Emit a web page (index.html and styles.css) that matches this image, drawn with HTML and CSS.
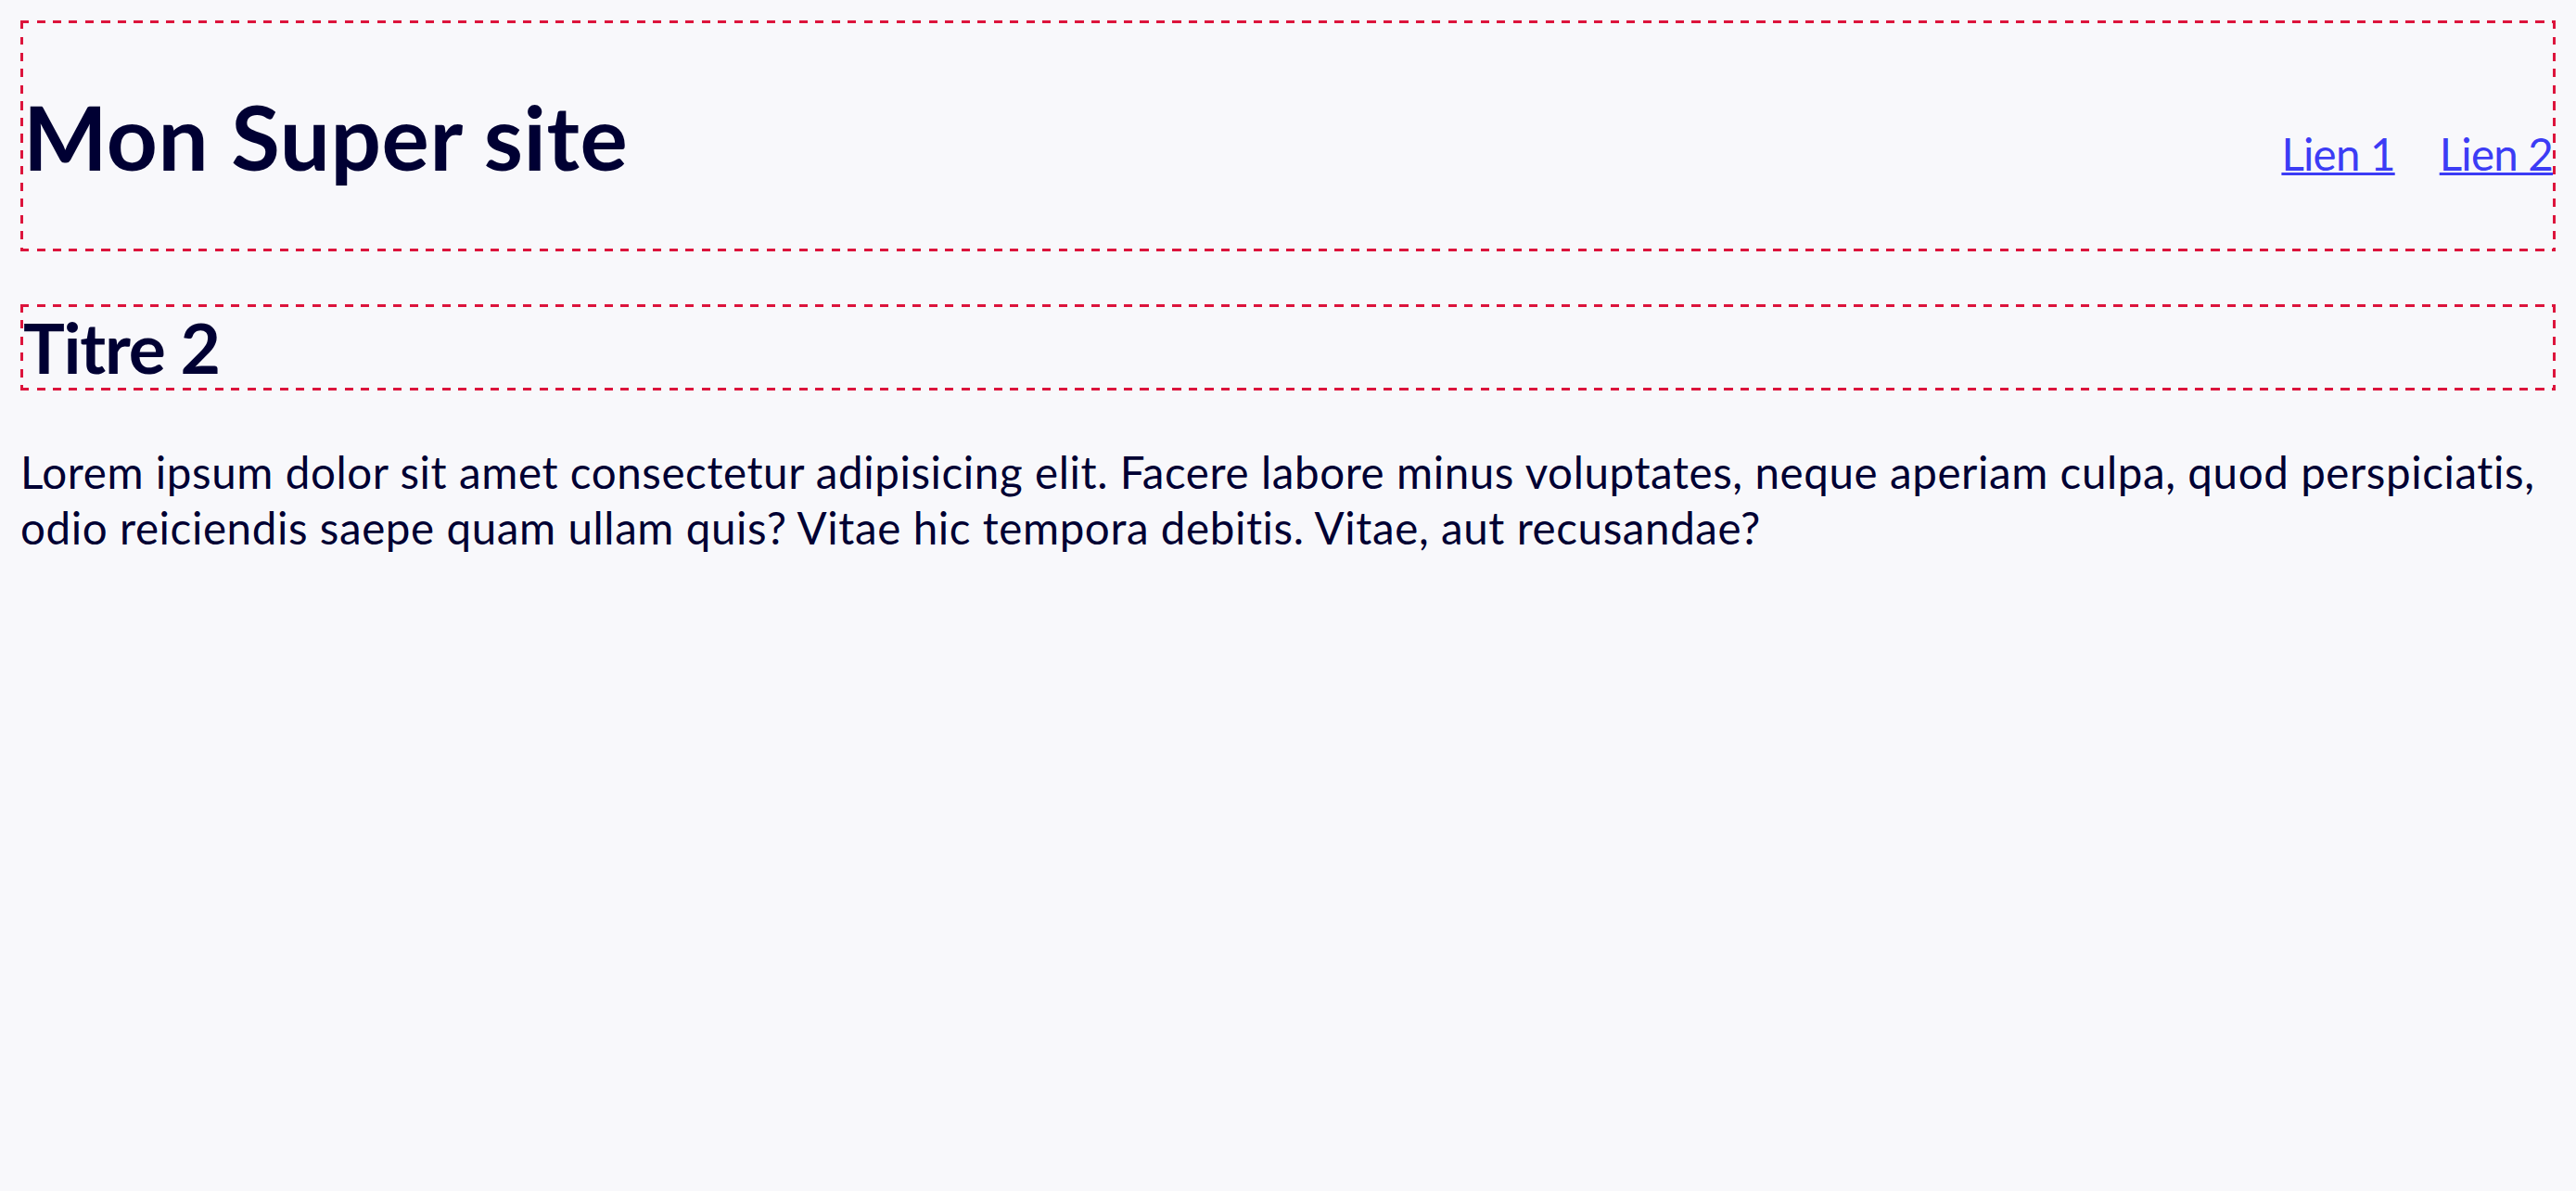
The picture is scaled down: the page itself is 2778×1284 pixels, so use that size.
FILE: index.html
```html
<!DOCTYPE html>
<html lang="fr">
<head>
<meta charset="utf-8">
<title>Mon Super site</title>
<link rel="stylesheet" href="styles.css">
</head>
<body>
<header class="site-header dashed-box">
  <h1 class="site-title">Mon Super site</h1>
  <nav class="site-nav">
    <a href="#" class="nav-link">Lien 1</a>
    <a href="#" class="nav-link">Lien 2</a>
  </nav>
</header>
<main class="content">
  <h2 class="section-title dashed-box">Titre 2</h2>
  <p class="text">Lorem ipsum dolor sit amet consectetur adipisicing elit. Facere labore minus voluptates, neque aperiam culpa, quod perspiciatis, odio reiciendis saepe quam ullam quis? Vitae hic tempora debitis. Vitae, aut recusandae?</p>
</main>
</body>
</html>
```

FILE: styles.css
```css
html {
  background: #f8f8fb;
}

body {
  margin: 22px;
  font-family: Lato, "Open Sans", sans-serif;
  color: #000033;
  font-size: 47.5px;
}

.dashed-box {
  border: 3px solid transparent;
  background-origin: border-box;
  background-clip: border-box;
  background-repeat: no-repeat;
  background-image:
    repeating-linear-gradient(90deg, #dc143c 0 9px, transparent 9px 17.5px),
    repeating-linear-gradient(90deg, #dc143c 0 9px, transparent 9px 17.5px),
    repeating-linear-gradient(180deg, #dc143c 0 9px, transparent 9px 17.5px),
    repeating-linear-gradient(180deg, #dc143c 0 9px, transparent 9px 17.5px);
  background-size: 100% 3px, 100% 3px, 3px 100%, 3px 100%;
  background-position: left top, left bottom, left top, right top;
}

.site-header {
  display: flex;
  justify-content: space-between;
  align-items: baseline;
}

.site-title {
  margin: 64px 0;
  font-size: 96px;
  font-weight: 700;
  line-height: 115px;
  letter-spacing: 0.6px;
}

.site-nav {
  display: flex;
  gap: 48px;
}

.nav-link {
  color: #3c3cf5;
  font-size: 47.5px;
  letter-spacing: -0.8px;
  text-decoration-thickness: 3px;
}

.section-title {
  margin: 57px 0 0;
  font-size: 75px;
  font-weight: 700;
  line-height: 87px;
  letter-spacing: -1.2px;
}

.text {
  margin: 58px 0 0;
  line-height: 60px;
  letter-spacing: 0.6px;
}
```
